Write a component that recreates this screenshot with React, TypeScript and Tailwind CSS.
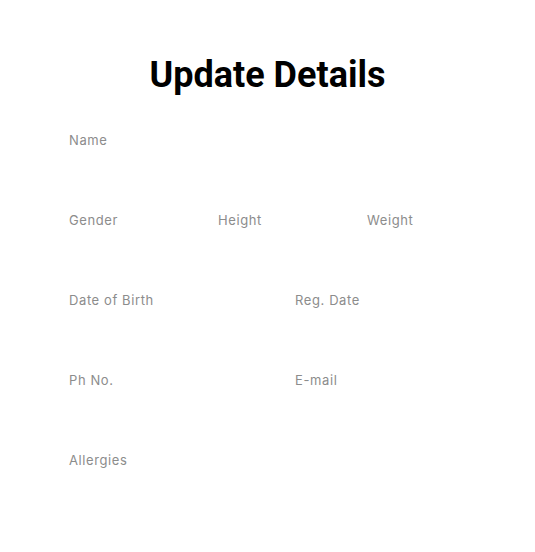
const labelCls = "text-[13px] leading-[20px] text-[#8c8c8c] tracking-[0.6px] font-['Inter',sans-serif]"

function Field({ label, className = "" }: { label: string; className?: string }) {
  return (
    <div className={`flex flex-col min-w-0 ${className}`}>
      <label className={labelCls}>{label}</label>
      <input className="mt-1 h-8 w-full min-w-0 bg-transparent outline-none" />
    </div>
  )
}

export default function App() {
  return (
    <div className="w-[535px] h-[552px] bg-white font-['Roboto',sans-serif]">
      <h1 className="pt-[50px] text-center text-[36px] font-bold text-black leading-[50px]">
        Update Details
      </h1>
      <form className="px-[69px] pt-[30px] flex flex-col gap-[24px]">
        <Field label="Name" />
        <div className="flex">
          <Field label="Gender" className="w-[149px] shrink-0" />
          <Field label="Height" className="w-[149px] shrink-0" />
          <Field label="Weight" className="flex-1" />
        </div>
        <div className="flex">
          <Field label="Date of Birth" className="w-[226px] shrink-0" />
          <Field label="Reg. Date" className="flex-1" />
        </div>
        <div className="flex">
          <Field label="Ph No." className="w-[226px] shrink-0" />
          <Field label="E-mail" className="flex-1" />
        </div>
        <Field label="Allergies" />
      </form>
    </div>
  )
}
